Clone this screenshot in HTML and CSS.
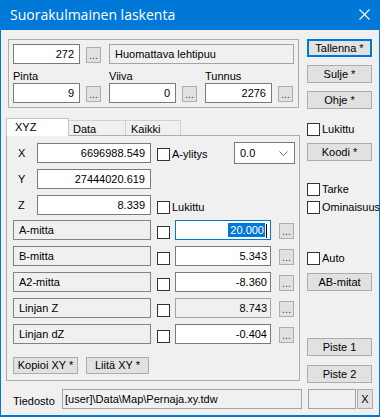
FILE: index.html
```html
<!DOCTYPE html>
<html lang="fi">
<head>
<meta charset="utf-8">
<title>Suorakulmainen laskenta</title>
<link rel="stylesheet" href="styles.css">
</head>
<body>
<div class="win">
  <div class="titlebar">
    <span class="title">Suorakulmainen laskenta</span>
    <svg class="close" width="11" height="11" viewBox="0 0 11 11"><path d="M0.5 0.5L10.5 10.5M10.5 0.5L0.5 10.5" stroke="#fff" stroke-width="1.1" fill="none"/></svg>
  </div>
  <div class="client">
    <div class="main">
      <div class="left">
        <div class="group">
          <div class="grow1">
            <div class="tb num w67">272</div>
            <div class="dots">...</div>
            <div class="tb ro wide">Huomattava lehtipuu</div>
          </div>
          <div class="grow2">
            <div class="field">
              <div class="flabel">Pinta</div>
              <div class="frow"><div class="tb num w67">9</div><div class="dots">...</div></div>
            </div>
            <div class="field">
              <div class="flabel">Viiva</div>
              <div class="frow"><div class="tb num w67">0</div><div class="dots">...</div></div>
            </div>
            <div class="field">
              <div class="flabel">Tunnus</div>
              <div class="frow"><div class="tb num w67">2276</div><div class="dots">...</div></div>
            </div>
          </div>
        </div>

        <div class="tabs">
          <div class="tab sel">XYZ</div>
          <div class="tab t-data">Data</div>
          <div class="tab t-all">Kaikki</div>
        </div>
        <div class="panel">
          <div class="xrow first">
            <div class="axis">X</div>
            <div class="tb num xin">6696988.549</div>
            <div class="cbl"><span class="chk"></span><span>A-ylitys</span></div>
            <div class="dd"><span>0.0</span><svg width="9" height="5" viewBox="0 0 9 5"><path d="M0.5 0.5L4.5 4.5L8.5 0.5" stroke="#6d6d6d" fill="none"/></svg></div>
          </div>
          <div class="xrow">
            <div class="axis">Y</div>
            <div class="tb num xin">27444020.619</div>
          </div>
          <div class="xrow">
            <div class="axis">Z</div>
            <div class="tb num xin">8.339</div>
            <div class="cbl low"><span class="chk"></span><span>Lukittu</span></div>
          </div>

          <div class="mrow firstm">
            <div class="mlabel">A-mitta</div>
            <span class="chk mchk"></span>
            <div class="tb num min focus"><span class="sel-text">20.000</span><span class="caret"></span></div>
            <div class="dots mdots">...</div>
          </div>
          <div class="mrow">
            <div class="mlabel">B-mitta</div>
            <span class="chk mchk"></span>
            <div class="tb num min">5.343</div>
            <div class="dots mdots">...</div>
          </div>
          <div class="mrow">
            <div class="mlabel">A2-mitta</div>
            <span class="chk mchk"></span>
            <div class="tb num min">-8.360</div>
            <div class="dots mdots">...</div>
          </div>
          <div class="mrow">
            <div class="mlabel">Linjan Z</div>
            <span class="chk mchk"></span>
            <div class="tb num min ro">8.743</div>
            <div class="dots mdots">...</div>
          </div>
          <div class="mrow">
            <div class="mlabel">Linjan dZ</div>
            <span class="chk mchk"></span>
            <div class="tb num min">-0.404</div>
            <div class="dots mdots">...</div>
          </div>

          <div class="copyrow">
            <div class="btn b-copy">Kopioi XY *</div>
            <div class="btn b-paste">Liitä XY *</div>
          </div>
        </div>
      </div>

      <div class="right">
        <div class="btn default r-save">Tallenna *</div>
        <div class="btn r-gap8">Sulje *</div>
        <div class="btn r-gap8">Ohje *</div>
        <div class="crow r-lock"><span class="chk"></span><span>Lukittu</span></div>
        <div class="btn r-code">Koodi *</div>
        <div class="crow r-tarke"><span class="chk"></span><span>Tarke</span></div>
        <div class="crow r-omin"><span class="chk"></span><span>Ominaisuus</span></div>
        <div class="crow r-auto"><span class="chk"></span><span>Auto</span></div>
        <div class="btn r-gap8">AB-mitat</div>
        <div class="btn r-p1">Piste 1</div>
        <div class="btn r-p2">Piste 2</div>
      </div>
    </div>

    <div class="bottom">
      <div class="tlabel">Tiedosto</div>
      <div class="tb ro tfile">[user]\Data\Map\Pernaja.xy.tdw</div>
      <div class="tb ro tsmall"></div>
      <div class="btn xbtn">X</div>
    </div>
  </div>
</div>
</body>
</html>
```

FILE: styles.css
```css
* { box-sizing: border-box; }
html, body { margin: 0; padding: 0; }
body {
  width: 380px;
  height: 417px;
  overflow: hidden;
  background: #f0f0f0;
  font-family: "Liberation Sans", Arial, sans-serif;
  font-size: 11px;
  color: #000;
}
.win {
  width: 380px;
  height: 417px;
  border: 1px solid #0078d7;
  border-top: 0;
  border-bottom-width: 2px;
  background: #f0f0f0;
  display: flex;
  flex-direction: column;
}
.titlebar {
  height: 30px;
  flex: none;
  background: #0078d7;
  color: #fff;
  display: flex;
  align-items: center;
  padding: 0 9px 1px 9px;
  font-family: "Open Sans", "Noto Sans", sans-serif;
  font-size: 14px;
}
.title { flex: 1; white-space: nowrap; }
.close { display: block; }

.client {
  display: flex;
  flex-direction: column;
  padding-left: 5px;
}
.main { display: flex; gap: 7px; align-items: flex-start; }
.left { width: 294px; display: flex; flex-direction: column; flex: none; }
.right { width: 65px; display: flex; flex-direction: column; flex: none; }

/* generic controls */
.tb {
  height: 20px;
  border: 1px solid #7a7a7a;
  background: #fff;
  line-height: 18px;
  padding: 0 5px;
  white-space: nowrap;
  overflow: hidden;
  flex: none;
}
.tb.num { text-align: right; }
.tb.ro { background: #f0f0f0; border-color: #a5a5a5; }
.tb.focus { border-color: #0078d7; }
.w67 { width: 67px; }
.dots {
  width: 15px;
  height: 16px;
  margin-top: 3px;
  margin-left: 6px;
  border: 1px solid #adadad;
  background: #e1e1e1;
  text-align: center;
  line-height: 14px;
  color: #444;
  flex: none;
}
.btn {
  height: 18px;
  border: 1px solid #adadad;
  background: #e1e1e1;
  text-align: center;
  line-height: 16px;
  white-space: nowrap;
  flex: none;
}
.btn.default { border-color: #0078d7; box-shadow: inset 0 0 0 1px #0078d7; }
.chk {
  display: block;
  width: 13px;
  height: 13px;
  border: 1px solid #333;
  background: #fff;
  flex: none;
}

/* top group */
.group {
  margin: 9px 0 0 2px;
  width: 291px;
  height: 69px;
  border: 1px solid #adadad;
  padding: 4px;
}
.grow1 { display: flex; height: 20px; }
.grow1 .wide { width: 185px; margin-left: 8px; }
.grow2 { display: flex; gap: 8px; margin-top: 6px; }
.field { display: flex; flex-direction: column; }
.flabel { height: 13px; line-height: 13px; }
.frow { display: flex; }

/* tabs */
.tabs {
  display: flex;
  align-items: flex-end;
  height: 17px;
  margin-top: 10px;
}
.tab {
  height: 15px;
  border: 1px solid #d0d0d0;
  border-bottom: 0;
  background: #f0f0f0;
  line-height: 16px;
  padding-left: 4px;
  flex: none;
}
.tab.sel {
  width: 63px;
  height: 18px;
  margin-bottom: -1px;
  background: #fff;
  border-color: #c4c4c4;
  padding-left: 8px;
  position: relative;
  z-index: 1;
}
.t-data { width: 58px; margin-left: -1px; }
.t-all { width: 56px; margin-left: -1px; padding-left: 5px; }

.panel {
  width: 294px;
  height: 246px;
  border: 1px solid #adadad;
  padding: 7px 4px 0 6px;
  display: flex;
  flex-direction: column;
}
.xrow { display: flex; height: 20px; align-items: flex-start; margin-top: 6px; }
.xrow.first { margin-top: 0; }
.axis { width: 24px; padding-left: 5px; line-height: 20px; flex: none; }
.xin { width: 114px; }
.cbl { display: flex; align-items: center; gap: 2px; margin-left: 6px; margin-top: 5px; line-height: 13px; }
.cbl.low { margin-top: 6px; }
.dd {
  margin-left: auto;
  margin-top: -1px;
  width: 61px;
  height: 22px;
  border: 1px solid #7a7a7a;
  background: #fff;
  display: flex;
  align-items: center;
  justify-content: space-between;
  padding: 0 6px 0 5px;
}
.dd svg { display: block; }

.mrow { display: flex; height: 20px; align-items: flex-start; margin-top: 6px; }
.mrow.firstm { margin-top: 5px; }
.mlabel {
  width: 138px;
  height: 20px;
  border: 1px solid #838383;
  background: #f0f0f0;
  padding-left: 5px;
  line-height: 18px;
  flex: none;
}
.mchk { margin-left: 6px; margin-top: 6px; }
.min { width: 96px; margin-left: 5px; padding-right: 3px; }
.mdots { margin-left: 8px; }
.sel-text { background: #0078d7; color: #fff; padding: 1px 1px 1px 2px; }
.caret { display: inline-block; width: 1px; height: 14px; background: #000; vertical-align: middle; margin-left: 1px; }

.copyrow { display: flex; gap: 8px; margin-top: 13px; }
.copyrow .btn { height: 17px; line-height: 15px; }
.b-copy { width: 65px; }
.b-paste { width: 63px; }

/* right column */
.r-save { margin-top: 9px; }
.r-gap8 { margin-top: 8px; }
.crow { display: flex; align-items: center; gap: 2px; height: 13px; line-height: 13px; white-space: nowrap; }
.r-lock { margin-top: 14px; }
.r-code { margin-top: 7px; }
.r-tarke { margin-top: 22px; }
.r-omin { margin-top: 5px; }
.r-auto { margin-top: 38px; }
.r-p1 { margin-top: 47px; }
.r-p2 { margin-top: 9px; }

/* bottom */
.bottom { display: flex; height: 20px; margin-top: 6px; padding-left: 7px; }
.tlabel { width: 49px; padding-top: 6px; line-height: 13px; flex: none; }
.tfile { width: 240px; padding-left: 2px; }
.tsmall { width: 48px; margin-left: 6px; }
.xbtn { width: 16px; height: 20px; margin-left: 1px; line-height: 18px; }
```
